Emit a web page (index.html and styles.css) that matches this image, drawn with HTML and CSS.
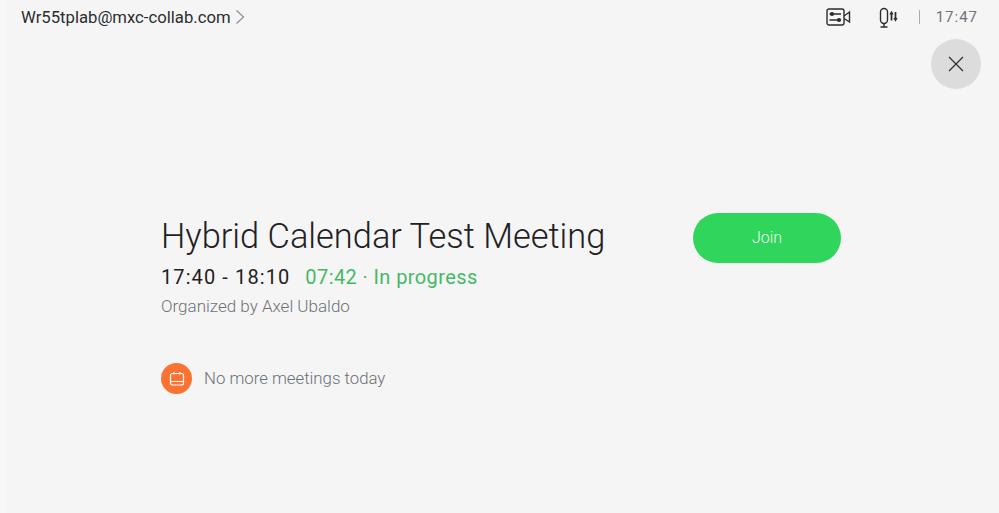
FILE: index.html
```html
<!DOCTYPE html>
<html lang="en" class="page">
<head>
  <meta charset="UTF-8">
  <title>Hybrid Calendar Test Meeting</title>
  <meta name="viewport" content="width=device-width,initial-scale=1.0">
  <link rel="stylesheet" href="styles.css">
</head>
<body class="page__body">
  <header class="topbar">
    <div class="topbar__account">
      <span>Wr55tplab@mxc-collab.com</span>
      <svg class="topbar__chevron" width="10" height="16" viewBox="0 0 10 16"><path d="M1.500 1.500 8.500 8l-7 6.500" fill="none" stroke="#8d8f91" stroke-width="1.200"/></svg>
    </div>
    <div class="topbar__status">
      <svg class="topbar__icon" width="25" height="18" viewBox="0 0 25 18" fill="none" stroke="#2b2d2f" stroke-width="1.400">
        <rect x="1" y="1" width="17" height="16" rx="2"/>
        <path d="M3.500 6H15M3.500 12H15"/>
        <circle cx="6" cy="6" r="1.400" fill="#2b2d2f"/>
        <circle cx="13" cy="12" r="1.400" fill="#2b2d2f"/>
        <path d="M18 8 23.500 4v10L18 10.500"/>
      </svg>
      <svg class="topbar__icon" width="20" height="21" viewBox="0 0 20 21" fill="none" stroke="#2b2d2f" stroke-width="1.400">
        <rect x="1.500" y="1.500" width="7" height="15" rx="3.500"/>
        <path d="M5 16.500v3.500M1.500 20h7"/>
        <path d="M12.500 6v7.500M16.500 5v7.500" stroke-width="1.700"/>
        <path d="M11 7.500 12.500 5 14 7.500M15 11l1.500 2.500L18 11" stroke-width="1.200"/>
      </svg>
      <span class="topbar__divider"></span>
      <span class="topbar__time">17:47</span>
    </div>
  </header>

  <div class="close-row">
    <button class="close-button" type="button" aria-label="Close">
      <svg width="16" height="16" viewBox="0 0 16 16"><path d="M1 1l14 14M15 1 1 15" stroke="#2f3133" stroke-width="1.300" fill="none"/></svg>
    </button>
  </div>

  <main class="meeting">
    <div class="meeting__row">
      <div class="meeting__info">
        <h1 class="meeting__title">Hybrid Calendar Test Meeting</h1>
        <p class="meeting__time">17:40 - 18:10<span class="meeting__progress">07:42 · In progress</span></p>
        <p class="meeting__organizer">Organized by Axel Ubaldo</p>
      </div>
      <button class="join-button" type="button">Join</button>
    </div>
    <div class="next">
      <span class="next__badge">
        <svg width="16" height="16" viewBox="0 0 16 16" fill="none" stroke="#fff" stroke-width="1.200">
          <rect x="1.500" y="2.500" width="13" height="11.500" rx="2"/>
          <path d="M1.500 10.500h13M5 1v2.500M11 1v2.500"/>
        </svg>
      </span>
      <span class="next__text">No more meetings today</span>
    </div>
  </main>
</body>
</html>
```

FILE: styles.css
```css
*, *::before, *::after {
  box-sizing: border-box;
}

.page, .page__body {
  height: 100%;
  font-family: "Roboto", sans-serif;
}

.page__body {
  margin: 0;
  background: #f5f5f5;
  border-left: 6px solid #f8f8f8;
  overflow: hidden;
}

.topbar {
  display: flex;
  justify-content: space-between;
  align-items: center;
  height: 34px;
  padding: 0 21px 0 15px;
}

.topbar__account {
  display: flex;
  align-items: center;
  gap: 4px;
  font-size: 16.700px;
  color: #2b2d2f;
}

.topbar__status {
  display: flex;
  align-items: center;
}

.topbar__icon {
  display: block;
}

.topbar__icon + .topbar__icon {
  margin-left: 28px;
}

.topbar__divider {
  width: 1px;
  height: 14px;
  margin: 0 16px 0 20px;
  background: #a9abad;
}

.topbar__time {
  font-size: 15px;
  letter-spacing: 1px;
  color: #6f7478;
}

.close-row {
  display: flex;
  justify-content: flex-end;
  padding: 5px 18px 0 0;
}

.close-button {
  display: flex;
  align-items: center;
  justify-content: center;
  width: 50px;
  height: 50px;
  padding: 0;
  border: 0;
  border-radius: 50%;
  background: #dcdcdc;
}

.meeting {
  width: 680px;
  margin: 125px 0 0 155px;
}

.meeting__row {
  display: flex;
  justify-content: space-between;
  align-items: flex-start;
}

.meeting__title {
  margin: 0;
  font-size: 34.400px;
  font-weight: 300;
  line-height: 44px;
  color: #1f2123;
}

.meeting__time {
  margin: 7px 0 0;
  font-size: 20px;
  line-height: 24px;
  letter-spacing: 1.100px;
  color: #1f2123;
}

.meeting__progress {
  margin-left: 15px;
  letter-spacing: 0.400px;
  color: #45b968;
}

.meeting__organizer {
  margin: 7px 0 0;
  font-size: 17px;
  font-weight: 300;
  line-height: 20px;
  color: #6f7275;
}

.join-button {
  width: 148px;
  height: 50px;
  margin-top: -1px;
  padding: 0 0 2px;
  border: 0;
  border-radius: 25px;
  background: #30d55b;
  font-family: inherit;
  font-size: 16px;
  font-weight: 300;
  color: #e9fbee;
}

.next {
  display: flex;
  align-items: center;
  gap: 12px;
  margin-top: 47px;
}

.next__badge {
  display: flex;
  align-items: center;
  justify-content: center;
  width: 31px;
  height: 31px;
  border-radius: 50%;
  background: #fb7333;
}

.next__text {
  padding-bottom: 2px;
  font-size: 16.800px;
  font-weight: 300;
  color: #6c7176;
}
```
